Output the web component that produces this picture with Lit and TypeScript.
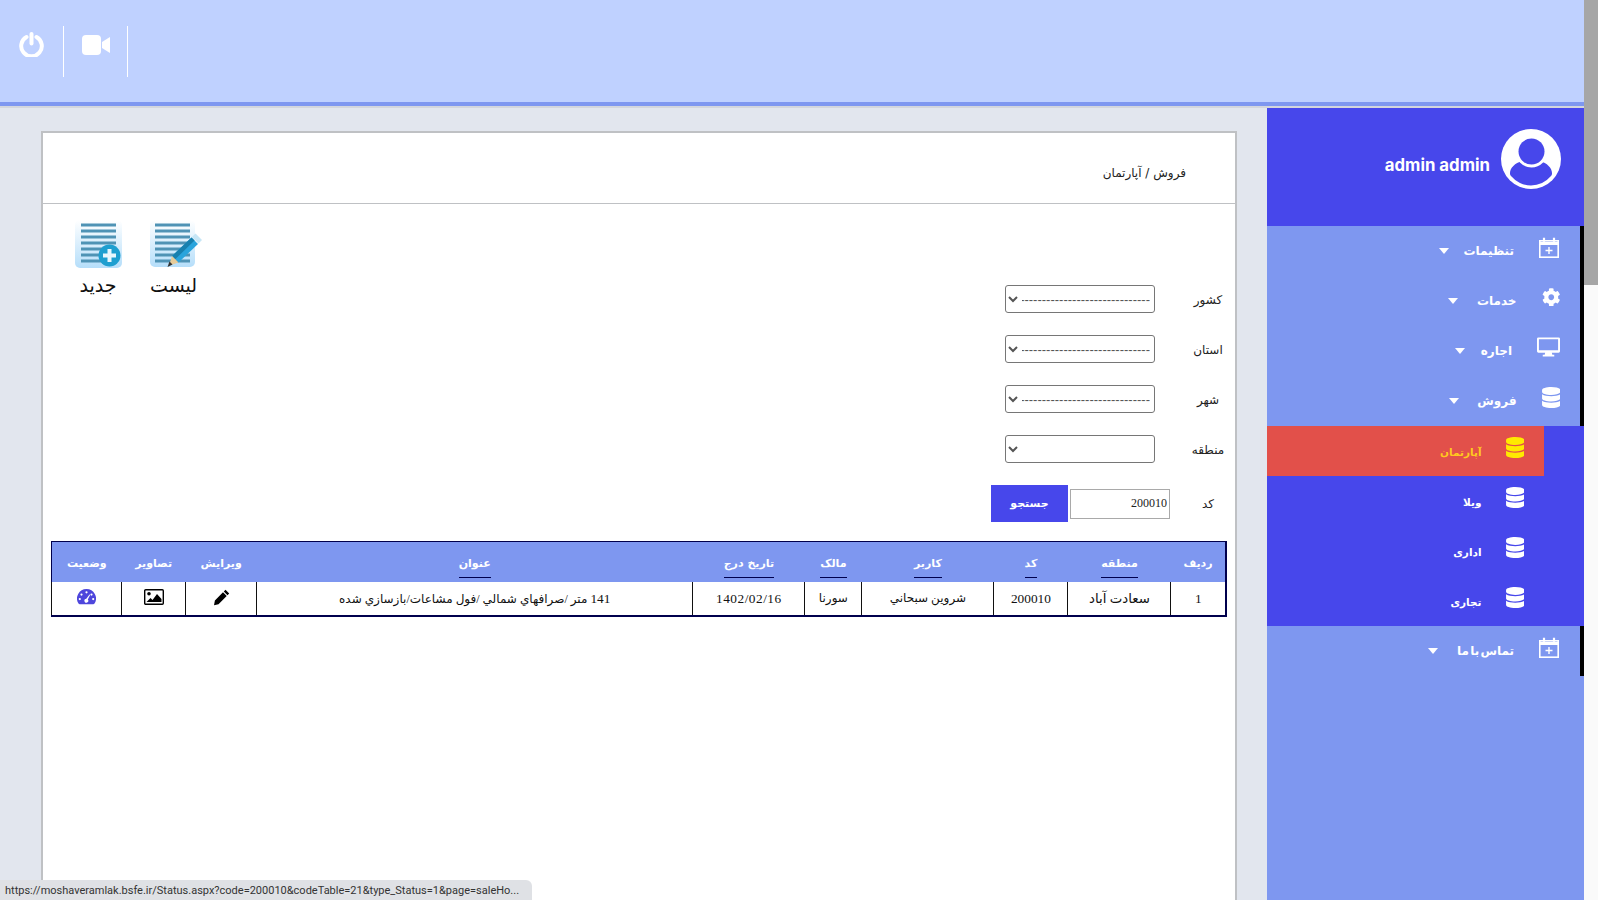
import { LitElement, html, css, svg } from "lit";
import { customElement } from "lit/decorators.js";

const DB = "M448 73.143v45.714C448 159.143 347.667 192 224 192S0 159.143 0 118.857V73.143C0 32.857 100.333 0 224 0s224 32.857 224 73.143zM448 176v102.857C448 319.143 347.667 352 224 352S0 319.143 0 278.857V176c48.125 33.143 136.208 48.572 224 48.572S399.874 209.143 448 176zm0 160v102.857C448 479.143 347.667 512 224 512S0 479.143 0 438.857V336c48.125 33.143 136.208 48.572 224 48.572S399.874 369.143 448 336z";
const COG = "M487.4 315.7l-42.6-24.6c4.3-23.2 4.3-47 0-70.2l42.6-24.6c4.9-2.8 7.1-8.6 5.5-14-11.1-35.6-30-67.8-54.7-94.6-3.8-4.1-10-5.1-14.8-2.3L380.8 110c-17.9-15.4-38.5-27.3-60.8-35.1V25.8c0-5.6-3.9-10.5-9.4-11.7-36.7-8.2-74.3-7.8-109.2 0-5.5 1.2-9.4 6.1-9.4 11.7V75c-22.2 7.9-42.8 19.8-60.8 35.1L88.7 85.5c-4.9-2.8-11-1.9-14.8 2.3-24.7 26.7-43.6 58.9-54.7 94.6-1.7 5.4.6 11.2 5.5 14L67.3 221c-4.3 23.2-4.3 47 0 70.2l-42.6 24.6c-4.9 2.8-7.1 8.6-5.5 14 11.1 35.6 30 67.8 54.7 94.6 3.8 4.1 10 5.1 14.8 2.3l42.6-24.6c17.9 15.4 38.5 27.3 60.8 35.1v49.2c0 5.6 3.9 10.5 9.4 11.7 36.7 8.2 74.3 7.8 109.2 0 5.5-1.2 9.4-6.1 9.4-11.7v-49.2c22.2-7.9 42.8-19.8 60.8-35.1l42.6 24.6c4.9 2.8 11 1.9 14.8-2.3 24.7-26.7 43.6-58.9 54.7-94.6 1.5-5.5-.7-11.3-5.6-14.1zM256 336c-44.1 0-80-35.9-80-80s35.9-80 80-80 80 35.9 80 80-35.9 80-80 80z";

const dbIcon = (c = "currentColor") => html`<svg width="18.500" height="21" viewBox="0 0 448 512"><path fill=${c} d=${DB} /></svg>`;
const cogIcon = html`<svg width="18.500" height="18.500" viewBox="0 0 512 512"><path fill="#fff" d=${COG} /></svg>`;
const calIcon = html`<svg width="20" height="21" viewBox="0 0 20 21" fill="none" stroke="#fff"><rect x=".8" y="3.800" width="18.400" height="16.400" stroke-width="1.600"/><path d="M1 6.500h18" stroke-width="3"/><path d="M5 .8v4M15 .8v4" stroke-width="2.200"/><path d="M10 10v7M6.500 13.500h7" stroke-width="1.400"/></svg>`;
const monIcon = html`<svg width="23" height="20" viewBox="0 0 24 20"><path fill="#fff" d="M1.500 0h21A1.500 1.500 0 0 1 24 1.500v13a1.500 1.500 0 0 1-1.500 1.500H15.500l.5 2H18v2H6v-2h2l.5-2H1.500A1.500 1.500 0 0 1 0 14.500v-13A1.500 1.500 0 0 1 1.500 0zM2 2v11.500h20V2z"/></svg>`;

type Item = { t: string; icon: unknown; right: number; gap: number };
const top1: Item[] = [
  { t: "تنظیمات", icon: calIcon, right: 25, gap: 14 },
  { t: "خدمات", icon: cogIcon, right: 24, gap: 19 },
  { t: "اجاره", icon: monIcon, right: 24, gap: 16 },
  { t: "فروش", icon: dbIcon("#fff"), right: 24, gap: 18 },
];
const subs = ["آپارتمان", "ویلا", "اداری", "تجاری"];
const heads = ["ردیف", "منطقه", "کد", "کاربر", "مالک", "تاریخ درج", "عنوان", "ویرایش", "تصاویر", "وضعیت"];
const widths = [55, 103, 74, 132, 57, 112, 436, 71, 64, 70];
const linked = [false, true, true, true, true, true, true, false, false, false];

const docLines = (x: number) => svg`<path d="M${x} 5h35M${x} 11h35M${x} 17h35M${x} 23h35M${x} 29h35M${x} 35h35M${x} 41h35" stroke="#4f93b5" stroke-width="2.800" fill="none"/>`;

@customElement("app-root")
export class AppRoot extends LitElement {
  static styles = css`
    :host { display: block; height: 900px; overflow: hidden; position: relative; font-family: "DejaVu Sans", sans-serif; background: #e2e6ee; }
    .page { display: flex; height: 900px; }
    .scroll { width: 14px; background: #fafafa; box-sizing: border-box; }
    .thumb { height: 285px; background: #a6a6a6; }
    .main { width: 1584px; display: flex; flex-direction: column; }
    .topbar { height: 102px; background: #bfd1ff; border-bottom: 4px solid #7e97f0; box-shadow: 0 2px 0 #d3d6dd; display: flex; align-items: flex-start; flex: none; }
    .tool { width: 64px; height: 51px; margin-top: 26px; border-right: 1px solid #fff; box-sizing: border-box; display: flex; justify-content: center; }
    .tool.power svg { margin: 6px 0 0 0; }
    .tool.cam svg { margin: 9px 0 0 1px; }
    .body { flex: 1; display: flex; min-height: 0; padding-top: 2px; }
    .content { width: 1267px; padding: 23px 0 0 41px; box-sizing: border-box; }
    .panel { width: 1196px; height: 780px; background: #fff; border: 2px solid #bfc1c4; border-bottom: 0; box-sizing: border-box; }
    .crumb { height: 60px; padding-top: 10px; border-bottom: 1px solid #bfc1c4; display: flex; align-items: center; padding-right: 49px; direction: rtl; font-size: 12px; color: #222; }
    .area { padding: 0 8px; }
    .upper { display: flex; justify-content: space-between; align-items: flex-start; }
    .tools { display: flex; gap: 28px; padding: 16px 0 0 23px; }
    .big { display: flex; flex-direction: column; font-size: 19px; color: #111; line-height: 24px; white-space: nowrap; }
    .big svg { display: block; margin-bottom: 5px; }
    .big.add { align-items: center; width: 48px; }
    .big.list { align-items: flex-start; width: 52px; }
    .form { direction: rtl; padding-top: 70px; }
    .row { display: flex; align-items: center; height: 50px; }
    .lab { width: 38px; padding-top: 2px; text-align: center; font-size: 12px; color: #222; flex: none; white-space: nowrap; }
    select { width: 150px; height: 28px; margin-right: 34px; font-family: "Liberation Sans", sans-serif; font-size: 13px; background: #fff; color: #555; border: 1px solid #767676; border-radius: 3px; box-sizing: border-box; }
    .row.code { height: 37px; margin-top: 11px; }
    .row.code .lab { padding-top: 0; }
    .code input { width: 100px; height: 30px; margin-right: 19px; box-sizing: border-box; border: 1px solid #a9a9a9; direction: rtl; padding: 0 2px; font: 12px "Liberation Serif", serif; color: #222; outline: none; }
    .code button { width: 77px; height: 37px; margin-right: 2px; background: #4747eb; color: #fff; border: 0; font: bold 11px "DejaVu Sans", sans-serif; padding: 0; }
    table { direction: rtl; margin-top: 19px; border-collapse: collapse; table-layout: fixed; width: 1176px; border: 2px solid #00004d; border-left-width: 1px; border-top-width: 1px; font-family: "Liberation Serif", "DejaVu Sans", serif; font-size: 12px; color: #111; }
    th { height: 40px; background: #7e97f0; color: #fff; font: bold 11px "DejaVu Sans", sans-serif; padding: 0; vertical-align: top; }
    th span { display: inline-block; margin-top: 14px; padding-bottom: 6px; line-height: 15px; border-bottom: 1px solid transparent; }
    th span.u { border-bottom-color: #00004d; }
    td { height: 33px; text-align: center; border-left: 1px solid #111; border-right: 1px solid #111; padding: 0; background: #fff; }
    td svg { display: block; margin: -3px auto 0; }
    .n { font-size: 13.330px; }
    .date { letter-spacing: .5px; }
    .status { position: fixed; left: 0; bottom: 0; width: 532px; height: 20px; background: #dfe1e5; border-top-right-radius: 6px; font: 11px/21px Roboto, sans-serif; color: #333; padding-left: 5px; box-sizing: border-box; white-space: nowrap; overflow: hidden; }
    .side { width: 317px; background: #7e97f0; color: #fff; font-size: 12px; direction: rtl; }
    .user { height: 118px; background: #4747eb; display: flex; align-items: center; padding-right: 23px; padding-bottom: 17px; box-sizing: border-box; font: 700 16.800px Inter, sans-serif; gap: 11px; direction: ltr; justify-content: flex-end; }
    .user span { margin-top: 13px; }
    .item { height: 50px; display: flex; align-items: center; border-right: 4px solid #000; box-sizing: border-box; font-weight: bold; word-spacing: -3px; white-space: nowrap; }
    .ic { flex: none; display: flex; justify-content: center; margin-top: -8px; }
    .txt { margin-right: 25px; }
    .caret { width: 0; height: 0; border: 5px solid transparent; border-top: 6px solid #fff; border-bottom: 0; flex: none; }
    .subs { background: #4747eb; }
    .sub { height: 50px; width: 277px; display: flex; align-items: center; padding-right: 20px; box-sizing: border-box; gap: 24px; font-weight: bold; font-size: 10.500px; margin-right: 40px; }
    .sub svg { margin-top: -7px; }
    .sub span { padding-top: 2px; }
    .sub.on { background: #e2504a; color: #ffc81e; }
    .sub.on svg path { fill: #ffea00; }
  `;

  renderItem(it: Item) {
    return html`<div class="item">
      <span class="ic" style="margin-right:${it.right - 4}px">${it.icon}</span>
      <span class="txt">${it.t}</span>
      <span class="caret" style="margin-right:${it.gap}px"></span>
    </div>`;
  }

  render() {
    return html`<div class="page">
      <div class="main">
        <div class="topbar">
          <div class="tool power">
            <svg width="25" height="25" viewBox="0 0 25 25" fill="none" stroke="#fff" stroke-width="4" stroke-linecap="round"><path d="M7.500 5a10.300 10.300 0 1 0 10 0"/><path d="M12.500 2v9.500"/></svg>
          </div>
          <div class="tool cam">
            <svg width="28" height="20" viewBox="0 0 28 20"><rect width="19" height="20" rx="4" fill="#fff"/><path d="M20 7 28 2v16l-8-5z" fill="#fff"/></svg>
          </div>
        </div>
        <div class="body">
          <div class="content">
            <div class="panel">
              <div class="crumb">فروش / آپارتمان</div>
              <div class="area">
                <div class="upper">
                  <div class="tools">
                    <div class="big add">
                      <svg width="47" height="48" viewBox="0 0 47 48"><defs><linearGradient id="g1" x1="0" y1="0" x2="0" y2="1"><stop offset="0" stop-color="#fff"/><stop offset="1" stop-color="#b5defa"/></linearGradient></defs><rect width="47" height="48" rx="5" fill="url(#g1)"/>${docLines(6)}<circle cx="34.500" cy="35.500" r="11" fill="#1e9fd0"/><path d="M34.500 29v13M28 35.500h13" stroke="#e9f7fd" stroke-width="4"/></svg>
                      <span>جدید</span>
                    </div>
                    <div class="big list">
                      <svg width="52" height="48" viewBox="0 0 52 48"><defs><linearGradient id="g2" x1="0" y1="0" x2="0" y2="1"><stop offset="0" stop-color="#fff"/><stop offset="1" stop-color="#b5defa"/></linearGradient></defs><rect width="45" height="47" rx="5" fill="url(#g2)"/>${docLines(5)}<path d="M45.500 13.500l6.500 6.500-3.500 3.500-6.500-6.500z" fill="#c6e6f6"/><path d="M41.500 17.500l6.500 6.500-19.500 18.500-6.500-6.500z" fill="#2aa4dc"/><path d="M41.500 17.500l3 3-19.500 19-3-3.500z" fill="#1880ae"/><path d="M22 36l6.500 6.500-6 2-3.500 1z" fill="#e6cc9a"/><path d="M19.500 41.500l3 3-5 2.500z" fill="#333"/></svg>
                      <span>لیست</span>
                    </div>
                  </div>
                  <div class="form">
                    ${[["کشور", true], ["استان", true], ["شهر", true], ["منطقه", false]].map(
                      ([l, d]) => html`<div class="row"><span class="lab">${l}</span><select><option>${d ? "------------------------------" : ""}</option></select></div>`
                    )}
                    <div class="row code"><span class="lab">کد</span><input value="200010" /><button>جستجو</button></div>
                  </div>
                </div>
                <table>
                  <colgroup>${widths.map((w) => html`<col style="width:${w}px" />`)}</colgroup>
                  <tr>${heads.map((h, i) => html`<th><span class=${linked[i] ? "u" : ""}>${h}</span></th>`)}</tr>
                  <tr>
                    <td class="n">1</td>
                    <td class="n">سعادت آباد</td>
                    <td class="n">200010</td>
                    <td>شروین سبحاني</td>
                    <td>سورنا</td>
                    <td class="n date">1402/02/16</td>
                    <td><span class="n">141</span> متر /صرافهاي شمالي /فول مشاعات/بازسازي شده</td>
                    <td><svg width="17" height="17" viewBox="0 0 17 17"><path d="M12.500.8l3.700 3.700-1.700 1.700-3.700-3.700zM10 3.300l3.700 3.700-8.200 8.200-4.500 1 .9-4.700z" fill="#000"/></svg></td>
                    <td><svg width="20" height="16" viewBox="0 0 20 16"><rect x=".7" y=".7" width="18.600" height="14.600" rx="1" fill="#fff" stroke="#000" stroke-width="1.400"/><circle cx="5" cy="4.700" r="1.800" fill="#000"/><path d="M2.500 13l4-4 2 2 4.500-6 4.500 5v3z" fill="#000"/></svg></td>
                    <td><svg width="19" height="16" viewBox="0 0 19 16"><path fill-rule="evenodd" fill="#4e46dc" d="M9.500 0a9.500 9.500 0 0 1 8 14.600 1.500 1.500 0 0 1-1.300.7H2.800a1.500 1.500 0 0 1-1.300-.7A9.500 9.500 0 0 1 9.500 0zM9.500 2.200a1.100 1.100 0 1 0 0 2.200 1.100 1.100 0 0 0 0-2.200zM4.500 4.500a1.100 1.100 0 1 0 0 2.200 1.100 1.100 0 0 0 0-2.200zM14.500 4.500a1.100 1.100 0 1 0 0 2.200 1.100 1.100 0 0 0 0-2.200zM2.800 9a1.100 1.100 0 1 0 0 2.200 1.100 1.100 0 0 0 0-2.200zM16.200 9a1.100 1.100 0 1 0 0 2.200 1.100 1.100 0 0 0 0-2.200zM12.500 5.500L9.300 9.800a1.900 1.900 0 1 0 1.500.7l2.400-4.700z"/></svg></td>
                  </tr>
                </table>
              </div>
            </div>
          </div>
          <div class="side">
            <div class="user">
              <span>admin admin</span>
              <svg width="60" height="60" viewBox="0 0 60 60"><circle cx="30" cy="30" r="30" fill="#fff"/><path d="M9 44c0-5 5-10 12-12h18c7 2 12 7 12 12 0 1 0 2-1 3a26 26 0 0 1-40 0c-1-1-1-2-1-3z" fill="#4747eb"/><circle cx="30.500" cy="22.500" r="16" fill="#fff"/><circle cx="30.500" cy="22.500" r="13" fill="#4747eb"/></svg>
            </div>
            ${top1.map((it) => this.renderItem(it))}
            <div class="subs">
              ${subs.map((s, i) => html`<div class="sub ${i === 0 ? "on" : ""}">${dbIcon("#fff")}<span>${s}</span></div>`)}
            </div>
            ${this.renderItem({ t: "تماس با ما", icon: calIcon, right: 25, gap: 19 })}
          </div>
        </div>
      </div>
      <div class="scroll"><div class="thumb"></div></div>
      <div class="status">https://moshaveramlak.bsfe.ir/Status.aspx?code=200010&amp;codeTable=21&amp;type_Status=1&amp;page=saleHo...</div>
    </div>`;
  }
}
